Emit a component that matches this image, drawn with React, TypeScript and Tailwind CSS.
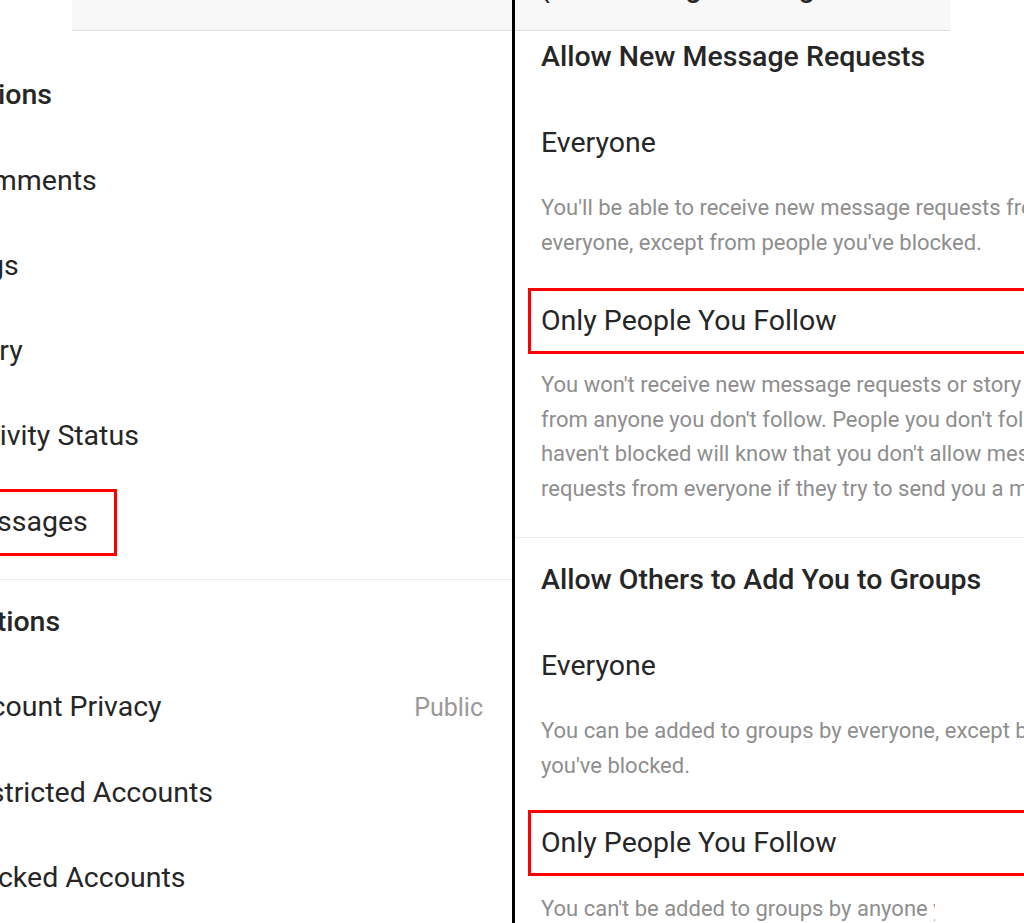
import React from "react"

const LEFT_ROWS: { label: string; kind: "head" | "item" | "boxed" | "divider"; value?: string }[] = [
  { label: "Interactions", kind: "head" },
  { label: "Comments", kind: "item" },
  { label: "Tags", kind: "item" },
  { label: "Story", kind: "item" },
  { label: "Activity Status", kind: "item" },
  { label: "Messages", kind: "boxed" },
  { label: "", kind: "divider" },
  { label: "Connections", kind: "head" },
  { label: "Account Privacy", kind: "item", value: "Public" },
  { label: "Restricted Accounts", kind: "item" },
  { label: "Blocked Accounts", kind: "item" },
]

function LeftPanel() {
  return (
    <div className="w-[512px] shrink-0 overflow-hidden">
      <div className="h-[31px] ml-[72px] bg-[#f8f8f8] border-b border-[#dedede]" />
      <div className="mt-[22px] flex flex-col">
        {LEFT_ROWS.map((row, i) => {
          if (row.kind === "divider") {
            return <div key={i} className="h-[15px] shrink-0 border-b border-[#ececec]" />
          }
          return (
            <div key={i} className="h-[85.3px] shrink-0 flex items-center justify-between pr-[29px]">
              {row.kind === "head" ? (
                <span className="ml-[-100px] text-[28.5px] font-medium whitespace-nowrap">{row.label}</span>
              ) : row.kind === "boxed" ? (
                <span className="ml-[-57px] h-[67px] inline-flex items-center border-[3px] border-[#ff0000] pl-[11px] pr-[26px] text-[28.5px] whitespace-nowrap">
                  {row.label}
                </span>
              ) : (
                <span className="ml-[-43px] text-[28.5px] whitespace-nowrap">{row.label}</span>
              )}
              {row.value && <span className="text-[25px] text-[#999999]">{row.value}</span>}
            </div>
          )
        })}
      </div>
    </div>
  )
}

function Desc({ lines, clip }: { lines: string[]; clip?: boolean }) {
  return (
    <div className={clip ? "ml-[26px] w-[394px] overflow-hidden" : "ml-[26px]"}>
      {lines.map((l) => (
        <div key={l} className="h-[34.5px] leading-[34.5px] text-[22px] text-[#8e8e8e] whitespace-nowrap">
          {l}
        </div>
      ))}
    </div>
  )
}

function RedOption({ className }: { className: string }) {
  return (
    <div className={`ml-[13px] w-[560px] h-[66px] flex items-center border-[3px] border-[#ff0000] pl-[10px] ${className}`}>
      <span className="text-[28.5px] whitespace-nowrap">Only People You Follow</span>
    </div>
  )
}

function RightPanel() {
  return (
    <div className="flex-1 min-w-0 overflow-hidden">
      {/* cropped header */}
      <div className="h-[31px] w-[435px] bg-[#f8f8f8] border-b border-[#dedede] overflow-hidden flex items-end gap-[50px] pl-[26px]">
        <span className="text-[32px] leading-none mb-[20px]">‹</span>
        <span className="text-[28.5px] font-medium leading-none mb-[28px] whitespace-nowrap">Message Settings</span>
      </div>

      <div className="mt-[8px] ml-[26px] h-[36px] leading-[36px] text-[28.5px] font-medium whitespace-nowrap">
        Allow New Message Requests
      </div>
      <div className="mt-[50px] ml-[26px] h-[36px] leading-[36px] text-[28.5px] whitespace-nowrap">Everyone</div>
      <div className="mt-[30px]">
        <Desc lines={["You'll be able to receive new message requests from", "everyone, except from people you've blocked."]} />
      </div>
      <RedOption className="mt-[28px]" />
      <div className="mt-[14px]">
        <Desc
          lines={[
            "You won't receive new message requests or story replies",
            "from anyone you don't follow. People you don't follow and",
            "haven't blocked will know that you don't allow message",
            "requests from everyone if they try to send you a message.",
          ]}
        />
      </div>
      <div className="mt-[31px] border-b border-[#ececec]" />

      <div className="mt-[24px] ml-[26px] h-[36px] leading-[36px] text-[28.5px] font-medium whitespace-nowrap">
        Allow Others to Add You to Groups
      </div>
      <div className="mt-[50px] ml-[26px] h-[36px] leading-[36px] text-[28.5px] whitespace-nowrap">Everyone</div>
      <div className="mt-[30px]">
        <Desc lines={["You can be added to groups by everyone, except by people", "you've blocked."]} />
      </div>
      <RedOption className="mt-[27px]" />
      <div className="mt-[16px]">
        <Desc clip lines={["You can't be added to groups by anyone you don't follow."]} />
      </div>
    </div>
  )
}

export default function App() {
  return (
    <div className="w-[1024px] h-[923px] overflow-hidden bg-white flex font-['Roboto',sans-serif] text-[#262626]">
      <LeftPanel />
      <div className="w-[3px] shrink-0 bg-black" />
      <RightPanel />
    </div>
  )
}
